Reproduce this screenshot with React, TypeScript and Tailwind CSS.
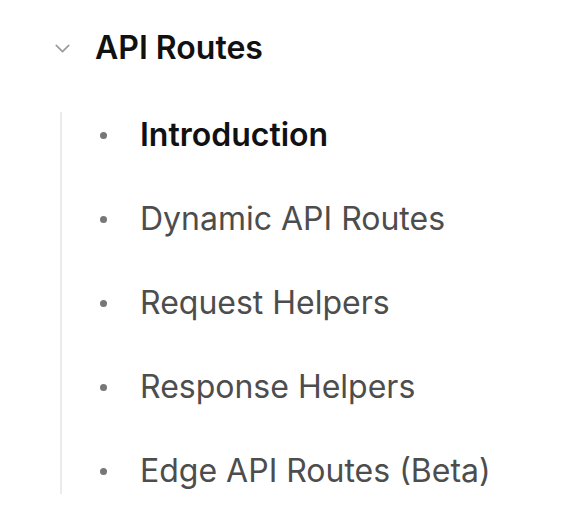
import { ChevronDown } from "lucide-react";

const items = [
  { title: "Introduction", active: true },
  { title: "Dynamic API Routes", active: false },
  { title: "Request Helpers", active: false },
  { title: "Response Helpers", active: false },
  { title: "Edge API Routes (Beta)", active: false },
];

export default function App() {
  return (
    <main
      className="w-[565px] h-[505px] bg-white pt-[26px]"
      style={{ fontFamily: "Inter, 'Noto Sans', sans-serif" }}
    >
      <div className="flex items-center h-[44px] pl-[50px]">
        <ChevronDown className="w-[25px] h-[25px] text-[#999999]" strokeWidth={1.5} />
        <span className="ml-[20px] text-[32px] font-semibold text-[#111111]">
          API Routes
        </span>
      </div>

      <ul className="ml-[60px] mt-[42px] border-l-2 border-[#ebebeb] flex flex-col gap-[38px]">
        {items.map((item) => (
          <li key={item.title} className="h-[46px] flex items-center pl-[38px]">
            <span className="w-[7px] h-[7px] rounded-full bg-[#777777]" />
            <span
              className={
                item.active
                  ? "ml-[33px] text-[32px] font-semibold text-[#111111]"
                  : "ml-[33px] text-[32px] text-[#4d4d4d]"
              }
            >
              {item.title}
            </span>
          </li>
        ))}
      </ul>
    </main>
  );
}
